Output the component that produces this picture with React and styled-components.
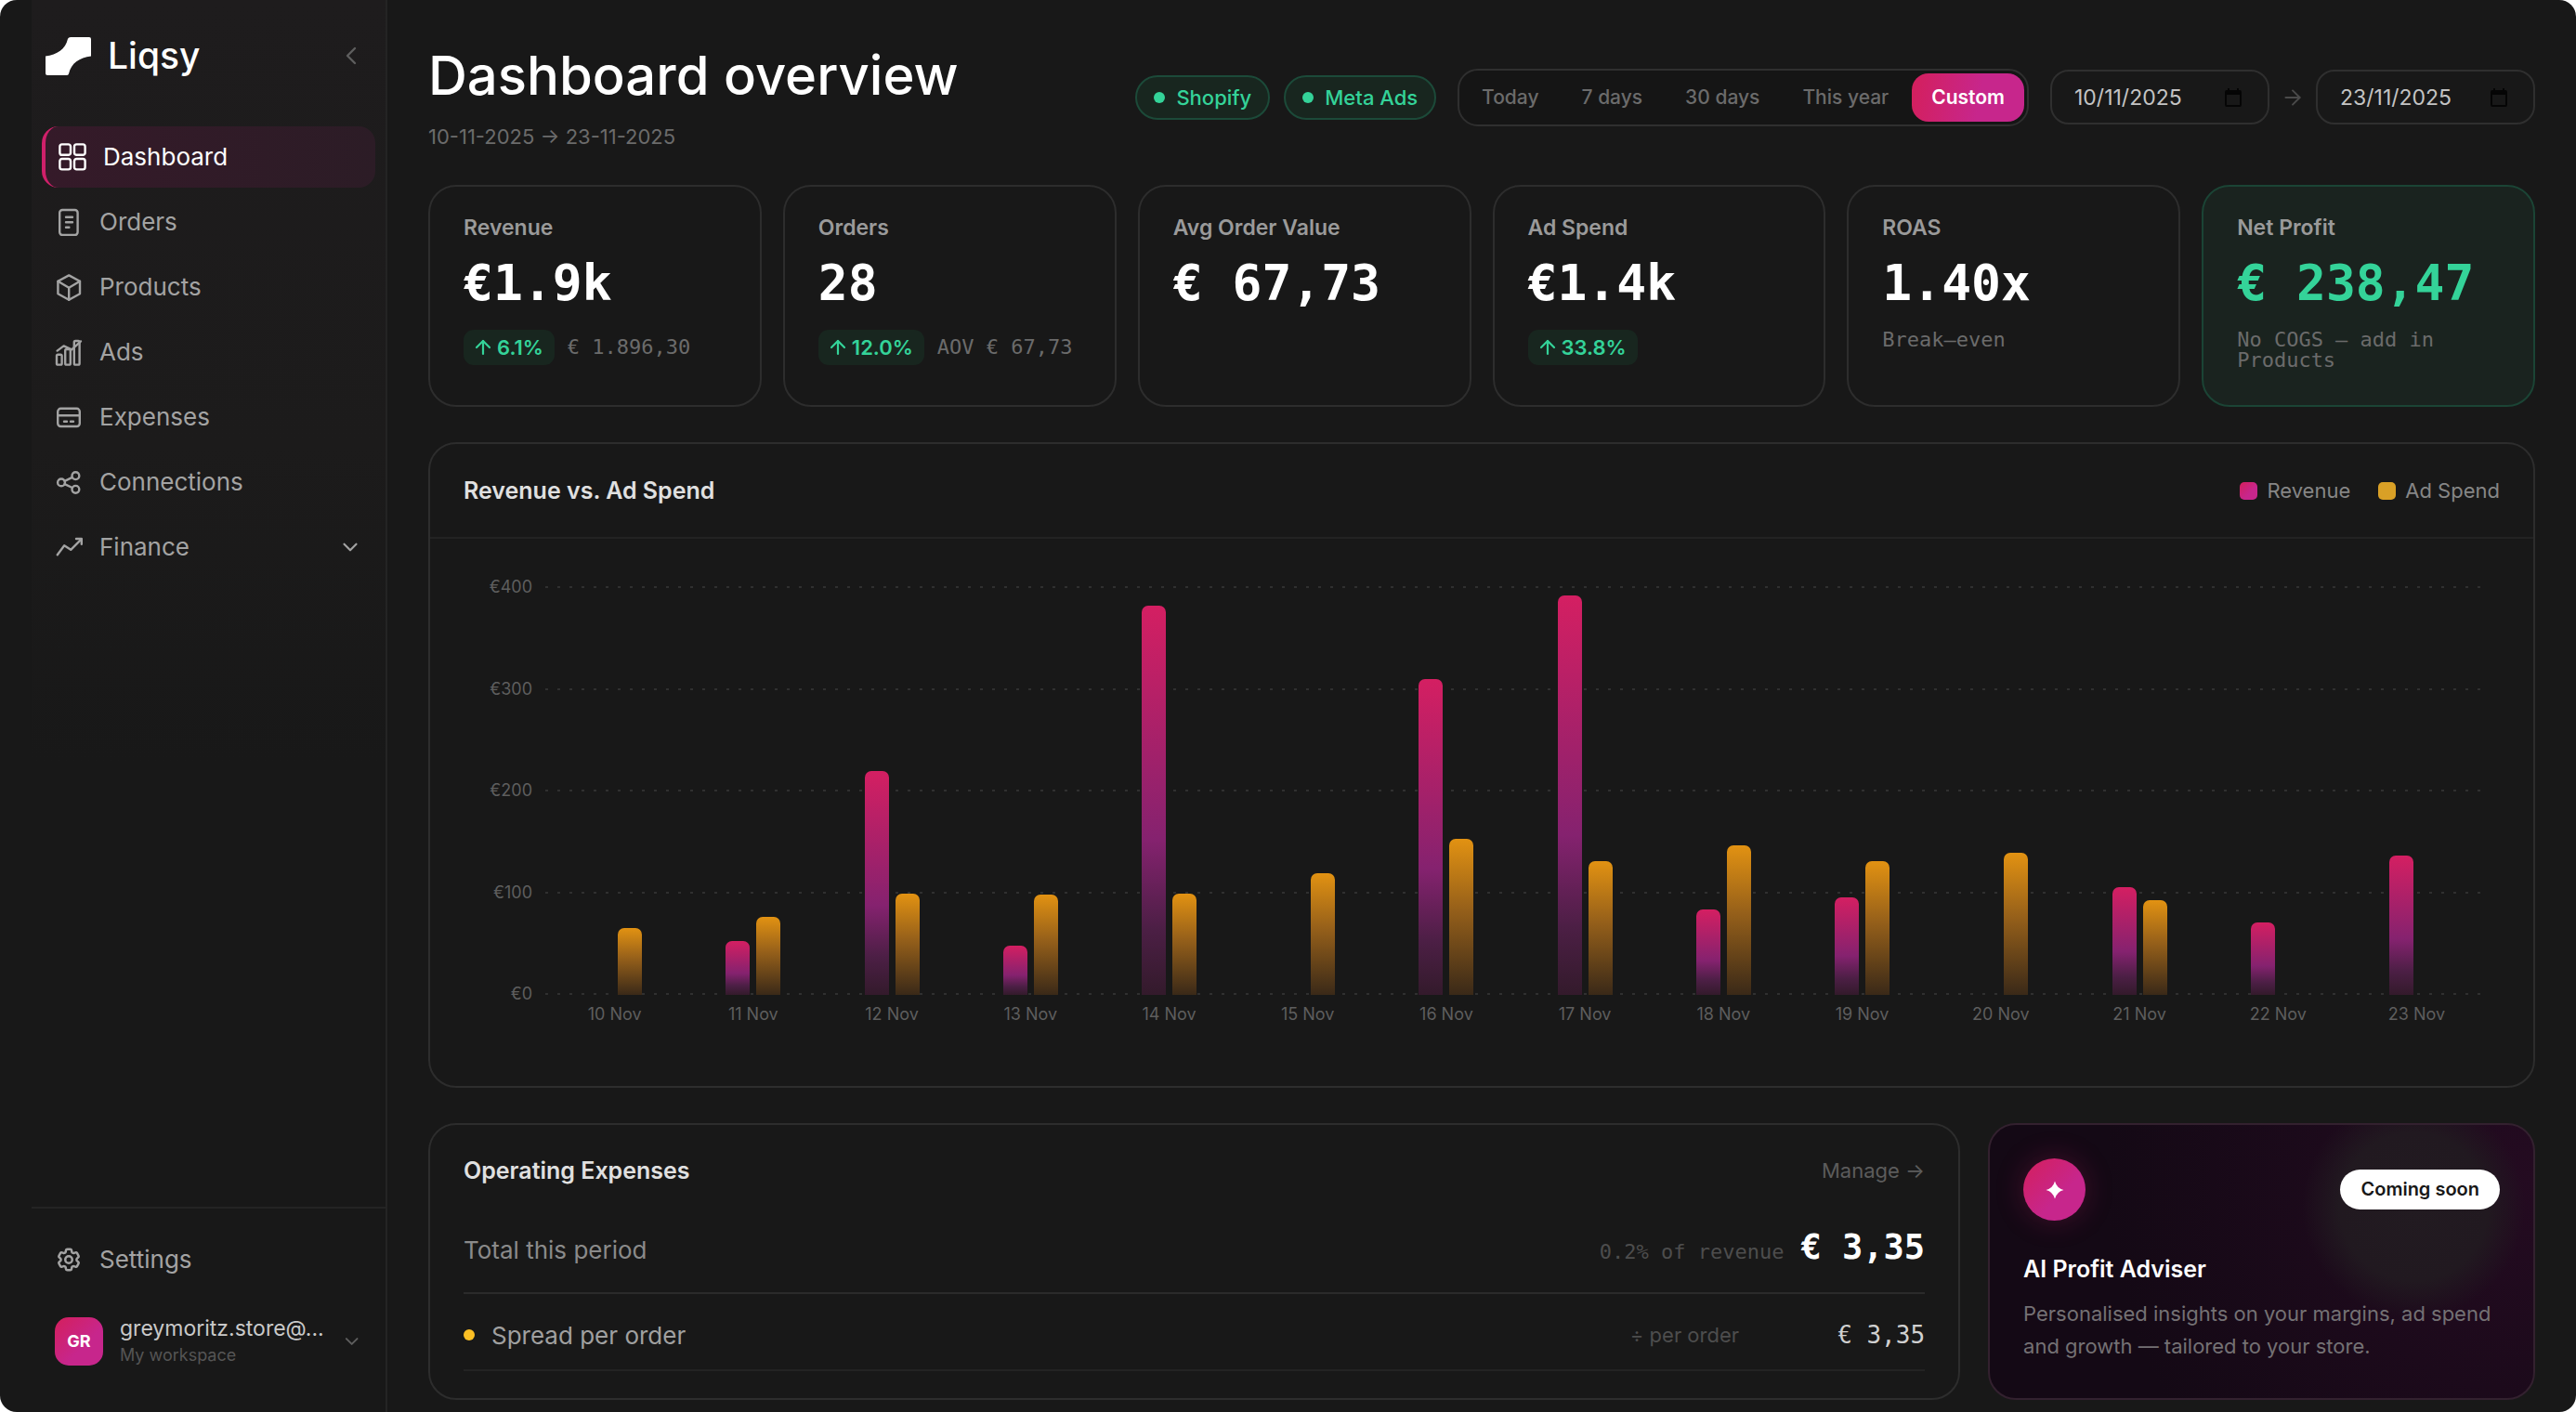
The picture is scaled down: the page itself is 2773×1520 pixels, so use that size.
import React, { useState } from 'react'
import styled, { createGlobalStyle, css } from 'styled-components'
import { ArrowRight, ArrowUp, ChevronDown, ChevronLeft } from 'lucide-react'
import { HiOutlineCog6Tooth } from 'react-icons/hi2'

const GlobalStyle = createGlobalStyle`
  *, *::before, *::after {
    box-sizing: border-box;
  }

  body {
    margin: 0;
    background: #ffffff;
    color: #ffffff;
    font-family: Inter, 'Noto Sans', sans-serif;
    font-size: 22px;
  }

  h1, h2, p, ul {
    margin: 0;
    padding: 0;
  }

  button, input {
    font-family: inherit;
  }

  a {
    color: inherit;
    text-decoration: none;
  }
`

const mono = css`
  font-family: 'DejaVu Sans Mono', 'Liberation Mono', monospace;
`

const brandGradient = 'linear-gradient(135deg, #d41f5c 0%, #c7268c 60%)'

const Shell = styled.div`
  display: flex;
  min-height: 100vh;
  padding-left: 34px;
  background: #181818;
  border-radius: 18px;
  overflow: hidden;
`

/* Sidebar */

const Sidebar = styled.aside`
  flex: none;
  display: flex;
  flex-direction: column;
  width: 383px;
  border-right: 2px solid #242424;
  background: linear-gradient(#1e1c1d 0, #1c1b1b 480px, #181818 820px);
`

const SidebarTop = styled.div`
  display: flex;
  align-items: center;
  gap: 19px;
  padding: 26px 21px 26px 15px;
  height: 120px;
  margin-bottom: 16px;
`

const Brand = styled.a`
  flex: 1;
  display: flex;
  align-items: center;
  gap: 18px;
  font-size: 39px;
  font-weight: 500;
  line-height: 46px;
`

const IconButton = styled.button`
  display: flex;
  padding: 0;
  border: none;
  background: none;
  color: #5e5e5e;
  cursor: pointer;
`

const Nav = styled.nav`
  display: flex;
  flex-direction: column;
  gap: 4px;
  padding: 0 11px;
`

const navItem = css`
  display: flex;
  align-items: center;
  gap: 18px;
  width: 100%;
  height: 66px;
  padding: 0 14px;
  border: none;
  border-radius: 18px;
  background: none;
  color: #a3a3a3;
  font-size: 26px;
  line-height: 32px;
  text-align: left;
  cursor: pointer;
`

const NavLink = styled.a`
  ${navItem}

  ${(props) =>
    props.$active &&
    css`
      border-left: 4px solid #d0206a;
      background: linear-gradient(90deg, #351a29, #2c1c26);
      color: #ffffff;
    `}
`

const NavToggle = styled.button`
  ${navItem}
`

const NavLabel = styled.span`
  flex: 1;
`

const SidebarFooter = styled.div`
  display: flex;
  flex-direction: column;
  gap: 22px;
  margin-top: auto;
  padding: 22px 11px 43px;
  border-top: 2px solid #242424;
`

const UserMenu = styled.button`
  ${navItem}
  color: #5e5e5e;
`

const Avatar = styled.span`
  flex: none;
  display: flex;
  align-items: center;
  justify-content: center;
  width: 52px;
  height: 52px;
  border-radius: 15px;
  background: ${brandGradient};
  color: #ffffff;
  font-size: 18px;
  font-weight: 700;
`

const UserText = styled.span`
  flex: 1;
  display: flex;
  flex-direction: column;
`

const UserName = styled.span`
  color: #c9c9c9;
  font-size: 23px;
  line-height: 30px;
`

const UserPlace = styled.span`
  color: #555555;
  font-size: 18px;
  line-height: 28px;
`

/* Page header */

const Main = styled.main`
  flex: 1;
  display: flex;
  flex-direction: column;
  gap: 38px;
  min-width: 0;
  padding: 48px 44px 13px;
`

const Header = styled.header`
  display: flex;
  align-items: center;
  justify-content: space-between;
`

const PageTitle = styled.h1`
  margin-bottom: 19px;
  font-size: 58px;
  font-weight: 500;
  line-height: 66px;
`

const Period = styled.p`
  color: #6b6b6b;
  line-height: 28px;
`

const Controls = styled.div`
  display: flex;
  align-items: center;
  gap: 23px;
`

const Sources = styled.div`
  display: flex;
  gap: 15px;
`

const SourcePill = styled.span`
  display: flex;
  align-items: center;
  gap: 12px;
  height: 48px;
  padding: 0 18px;
  border: 2px solid #1c4a39;
  border-radius: 24px;
  background: #18261f;
  color: #34d399;
  font-weight: 500;
`

const Dot = styled.span`
  flex: none;
  width: 12px;
  height: 12px;
  border-radius: 50%;
  background: ${(props) => props.$color};
`

const RangeGroup = styled.div`
  display: flex;
  gap: 4px;
  padding: 3px;
  border: 2px solid #2f2f2f;
  border-radius: 22px;
  background: #151515;
`

const RangeButton = styled.button`
  height: 52px;
  padding: 0 21px;
  border: none;
  border-radius: 18px;
  background: ${(props) => (props.$active ? 'linear-gradient(100deg, #d41f5c, #c7268c 60%)' : 'none')};
  color: ${(props) => (props.$active ? '#ffffff' : '#6b6b6b')};
  font-size: 21px;
  font-weight: ${(props) => (props.$active ? 600 : 500)};
  cursor: pointer;
`

const DateRange = styled.div`
  display: flex;
  align-items: center;
  gap: 12px;
  color: #4a4a4a;
`

const DateField = styled.label`
  display: flex;
  align-items: center;
  width: 236px;
  height: 59px;
  padding: 0 28px 0 24px;
  border: 2px solid #2f2f2f;
  border-radius: 20px;
`

const DateInput = styled.input`
  flex: 1;
  min-width: 0;
  padding: 0;
  border: none;
  outline: none;
  background: none;
  color: #c4c4c4;
  font-size: 23px;
`

/* Cards */

const Card = styled.section`
  border: 2px solid ${(props) => (props.$positive ? '#1b4435' : '#2d2d2d')};
  border-radius: 30px;
  background: ${(props) => (props.$positive ? '#1a231f' : '#181818')};
`

const Stats = styled.div`
  display: grid;
  grid-template-columns: repeat(6, 1fr);
  gap: 23px;
`

const StatCard = styled(Card)`
  padding: 30px 36px 37px;
`

const StatLabel = styled.h2`
  color: #9a9a9a;
  font-size: 23px;
  font-weight: 600;
  line-height: 28px;
`

const StatValue = styled.p`
  ${mono}
  margin: 18px 0 22px;
  color: ${(props) => (props.$positive ? '#34d399' : '#ffffff')};
  font-size: 53px;
  font-weight: 700;
  line-height: 56px;
  white-space: nowrap;
`

const StatFoot = styled.div`
  ${mono}
  display: flex;
  align-items: center;
  gap: 14px;
  color: #6b6b6b;
  line-height: 22px;
`

const Change = styled.span`
  display: flex;
  align-items: center;
  gap: 3px;
  height: 38px;
  padding: 0 12px 0 9px;
  border-radius: 11px;
  background: #18261f;
  color: #34d399;
  font-family: Inter, sans-serif;
  font-size: 22px;
  font-weight: 600;
`

const CardTitle = styled.h2`
  color: ${(props) => props.$color || '#e0e0e0'};
  font-size: 25px;
  font-weight: 600;
  line-height: 32px;
`

/* Chart */

const ChartHeader = styled.div`
  display: flex;
  align-items: center;
  justify-content: space-between;
  height: 102px;
  padding: 0 36px;
  border-bottom: 2px solid #232323;
`

const Legend = styled.ul`
  display: flex;
  gap: 30px;
  color: #868686;
  list-style: none;
`

const LegendItem = styled.li`
  display: flex;
  align-items: center;
  gap: 10px;
`

const Swatch = styled.span`
  width: 19px;
  height: 19px;
  border-radius: 5px;
  background: ${(props) => props.$fill};
`

const ChartBody = styled.div`
  display: grid;
  grid-template-columns: 74px 1fr;
  column-gap: 14px;
  padding: 51px 51px 64px 36px;
  color: #5e5e5e;
  font-size: 18px;
`

const AxisY = styled.div`
  display: flex;
  flex-direction: column;
  justify-content: space-between;
  line-height: 2px;
  text-align: right;
`

const Plot = styled.div`
  display: grid;
  height: 440px;
`

const GridLines = styled.div`
  grid-area: 1 / 1;
  display: flex;
  flex-direction: column;
  justify-content: space-between;
`

const GridLine = styled.span`
  height: 2px;
  background: repeating-linear-gradient(90deg, #303030 0 3px, transparent 3px 13px);
`

const Days = styled.div`
  grid-area: 1 / 1;
  display: flex;
  padding-top: 1px;
`

const Day = styled.div`
  flex: 1;
  display: grid;
  grid-template-columns: 26px 26px;
  justify-content: center;
  align-items: end;
  column-gap: 7px;
`

const Bar = styled.span`
  border-radius: 7px 7px 0 0;
  background: ${(props) =>
    props.$kind === 'revenue'
      ? 'linear-gradient(#d41f62, #85226f 60%, #4c1f45 83%, #331a2b)'
      : 'linear-gradient(#e29212, #96601a 45%, #3a2918)'};
`

const AxisX = styled.div`
  grid-column: 2;
  display: flex;
  margin-top: 8px;
  line-height: 26px;
  text-align: center;
`

const AxisLabel = styled.span`
  flex: 1;
`

/* Bottom row */

const BottomRow = styled.div`
  display: grid;
  grid-template-columns: 2.8fr 1fr;
  gap: 30px;
`

const ExpensesCard = styled(Card)`
  padding: 33px 36px 29px;
`

const ExpensesHeader = styled.div`
  display: flex;
  align-items: center;
  justify-content: space-between;
`

const ManageLink = styled.a`
  display: flex;
  align-items: center;
  gap: 4px;
  color: #5c5c5c;
`

const ExpenseTotal = styled.div`
  display: flex;
  align-items: baseline;
  justify-content: space-between;
  margin-top: 26px;
  padding: 20px 0 22px;
  border-bottom: 2px solid #2b2b2b;
  color: #8a8a8a;
  font-size: 26px;
  line-height: 42px;
`

const TotalValue = styled.span`
  ${mono}
  display: flex;
  align-items: baseline;
  gap: 18px;
`

const Share = styled.span`
  color: #4d4d4d;
  font-size: 22px;
`

const Total = styled.strong`
  color: #ffffff;
  font-size: 37px;
`

const ExpenseList = styled.ul`
  margin-top: 7px;
  list-style: none;
`

const ExpenseRow = styled.li`
  display: flex;
  align-items: center;
  height: 76px;
  border-bottom: 2px solid #232323;
  color: #a0a0a0;
  font-size: 26px;
`

const ExpenseName = styled.span`
  flex: 1;
  margin-left: 18px;
`

const ExpenseBasis = styled.span`
  color: #4d4d4d;
  font-size: 22px;
`

const ExpenseAmount = styled.span`
  ${mono}
  width: 200px;
  color: #d0d0d0;
  text-align: right;
`

const AdviserCard = styled(Card)`
  padding: 36px;
  border-color: #33212f;
  background:
    radial-gradient(circle at 78% 30%, #221b21 0, #211920 80px, transparent 120px),
    radial-gradient(circle at 100% 20%, #240b21, transparent 460px),
    #140915;
`

const AdviserTop = styled.div`
  display: flex;
  align-items: center;
  justify-content: space-between;
  margin-bottom: 36px;
`

const AdviserIcon = styled.span`
  display: flex;
  align-items: center;
  justify-content: center;
  width: 67px;
  height: 67px;
  border-radius: 50%;
  background: ${brandGradient};
  box-shadow: 0 0 30px rgba(208, 32, 106, 0.25);
`

const SoonBadge = styled.span`
  height: 43px;
  padding: 0 22px;
  border-radius: 22px;
  background: #ffffff;
  color: #181818;
  font-size: 20px;
  font-weight: 600;
  line-height: 43px;
`

const AdviserText = styled.p`
  margin-top: 15px;
  color: #747174;
  line-height: 35px;
`

const Icon = ({ children }) => (
  <svg
    width="30"
    height="30"
    viewBox="0 0 30 30"
    fill="none"
    stroke="currentColor"
    strokeWidth="2.4"
    strokeLinecap="round"
    strokeLinejoin="round"
    aria-hidden="true"
  >
    {children}
  </svg>
)

const DashboardIcon = () => (
  <Icon>
    <rect x="1.4" y="1.4" width="11.6" height="11.4" rx="2.4" />
    <rect x="17" y="1.4" width="11.6" height="11.4" rx="2.4" />
    <rect x="1.4" y="17" width="11.6" height="11.4" rx="2.4" />
    <rect x="17" y="17" width="11.6" height="11.4" rx="2.4" />
  </Icon>
)

const OrdersIcon = () => (
  <Icon>
    <rect x="5.2" y="2" width="19.4" height="27" rx="3" />
    <path d="M12 9.8h7M12 15.2h7M12 20.8h3.4" />
  </Icon>
)

const ProductsIcon = () => (
  <Icon>
    <path d="M15.2 2.4 27 8.8v13.4l-11.8 6.6L3.4 22.2V8.8z" />
    <path d="m3.4 8.8 11.8 7 11.8-7M15.2 15.8v13" />
  </Icon>
)

const AdsIcon = () => (
  <Icon>
    <rect x="2" y="17.8" width="5.6" height="10.8" rx="1.4" />
    <rect x="11.2" y="12" width="5.6" height="16.6" rx="1.4" />
    <rect x="20.8" y="3" width="5.8" height="25.6" rx="1.4" />
    <path d="m2.6 13.6 7-5.2 8.6 4L28 3.4" />
  </Icon>
)

const ExpensesIcon = () => (
  <Icon>
    <rect x="3.2" y="5.8" width="23.6" height="19.2" rx="3.2" />
    <path d="M3.2 13.2h23.6M10 19.8h3M17 19.8h3" />
  </Icon>
)

const ConnectionsIcon = () => (
  <Icon>
    <circle cx="7" cy="15.4" r="3.9" />
    <circle cx="22.4" cy="8.2" r="3.9" />
    <circle cx="22.4" cy="22.8" r="3.9" />
    <path d="m10.6 13.8 8.2-3.9M10.6 17.1l8.2 3.9" />
  </Icon>
)

const FinanceIcon = () => (
  <Icon>
    <path d="m2.8 23.2 7.4-10 7 4.6L28.4 6.6" />
    <path d="M23 6h5.8v5.8" />
  </Icon>
)

const CalendarIcon = () => (
  <svg width="18" height="20" viewBox="0 0 18 20" fill="#050505" aria-hidden="true">
    <path
      fillRule="evenodd"
      d="M3 0h2v2h8V0h2v2h1a2 2 0 0 1 2 2v14a2 2 0 0 1-2 2H2a2 2 0 0 1-2-2V4a2 2 0 0 1 2-2h1zM2 7v11h14V7z"
    />
  </svg>
)

const Logo = () => (
  <svg width="49" height="41" viewBox="0 0 49 41" fill="#ffffff" aria-hidden="true">
    <path d="M27 0h20q2 0 2 2v18.500C36.500 22 27.500 28 25 39.500Q24.500 41 22.500 41H2q-2 0-2-2V20.500C12.500 19 21.500 13 24 1.800Q24.800 0 27 0z" />
  </svg>
)

const SparkIcon = () => (
  <svg width="20" height="20" viewBox="0 0 20 20" fill="#ffffff" aria-hidden="true">
    <path d="M10 0.500Q12 8 19.500 10 12 12 10 19.500 8 12 0.500 10 8 8 10 0.500z" />
  </svg>
)

const NAV = [
  { label: 'Dashboard', icon: DashboardIcon },
  { label: 'Orders', icon: OrdersIcon },
  { label: 'Products', icon: ProductsIcon },
  { label: 'Ads', icon: AdsIcon },
  { label: 'Expenses', icon: ExpensesIcon },
  { label: 'Connections', icon: ConnectionsIcon },
]

const RANGES = ['Today', '7 days', '30 days', 'This year', 'Custom']

const STATS = [
  { label: 'Revenue', value: '€1.9k', change: '6.1%', note: '€ 1.896,30' },
  { label: 'Orders', value: '28', change: '12.0%', note: 'AOV € 67,73' },
  { label: 'Avg Order Value', value: '€ 67,73' },
  { label: 'Ad Spend', value: '€1.4k', change: '33.8%' },
  { label: 'ROAS', value: '1.40x', note: 'Break–even' },
  { label: 'Net Profit', value: '€ 238,47', note: 'No COGS — add in Products', positive: true },
]

const CHART_MAX = 400

const DAYS = [
  { label: '10 Nov', revenue: 0, spend: 66 },
  { label: '11 Nov', revenue: 53, spend: 77 },
  { label: '12 Nov', revenue: 220, spend: 99 },
  { label: '13 Nov', revenue: 48, spend: 98 },
  { label: '14 Nov', revenue: 382, spend: 99 },
  { label: '15 Nov', revenue: 0, spend: 119 },
  { label: '16 Nov', revenue: 310, spend: 153 },
  { label: '17 Nov', revenue: 392, spend: 131 },
  { label: '18 Nov', revenue: 84, spend: 147 },
  { label: '19 Nov', revenue: 96, spend: 131 },
  { label: '20 Nov', revenue: 0, spend: 139 },
  { label: '21 Nov', revenue: 106, spend: 93 },
  { label: '22 Nov', revenue: 71, spend: 0 },
  { label: '23 Nov', revenue: 137, spend: 0 },
]

const TICKS = [400, 300, 200, 100, 0]

const barHeight = (value) => ({ height: `${(value / CHART_MAX) * 100}%` })

function AppSidebar() {
  return (
    <Sidebar>
      <SidebarTop>
        <Brand href="#">
          <Logo />
          Liqsy
        </Brand>
        <IconButton type="button" aria-label="Collapse sidebar">
          <ChevronLeft size={32} strokeWidth={1.8} />
        </IconButton>
      </SidebarTop>
      <Nav>
        {NAV.map(({ label, icon: ItemIcon }) => (
          <NavLink key={label} href="#" $active={label === 'Dashboard'}>
            <ItemIcon />
            <NavLabel>{label}</NavLabel>
          </NavLink>
        ))}
        <NavToggle type="button">
          <FinanceIcon />
          <NavLabel>Finance</NavLabel>
          <ChevronDown size={26} />
        </NavToggle>
      </Nav>
      <SidebarFooter>
        <NavLink href="#">
          <HiOutlineCog6Tooth size={30} strokeWidth={2} />
          <NavLabel>Settings</NavLabel>
        </NavLink>
        <UserMenu type="button">
          <Avatar>GR</Avatar>
          <UserText>
            <UserName>greymoritz.store@...</UserName>
            <UserPlace>My workspace</UserPlace>
          </UserText>
          <ChevronDown size={26} />
        </UserMenu>
      </SidebarFooter>
    </Sidebar>
  )
}

function PageHeader() {
  const [range, setRange] = useState('Custom')
  const [from, setFrom] = useState('10/11/2025')
  const [to, setTo] = useState('23/11/2025')

  return (
    <Header>
      <div>
        <PageTitle>Dashboard overview</PageTitle>
        <Period>10-11-2025 → 23-11-2025</Period>
      </div>
      <Controls>
        <Sources>
          <SourcePill><Dot $color="#34d399" />Shopify</SourcePill>
          <SourcePill><Dot $color="#34d399" />Meta Ads</SourcePill>
        </Sources>
        <RangeGroup>
          {RANGES.map((name) => (
            <RangeButton key={name} type="button" $active={name === range} onClick={() => setRange(name)}>
              {name}
            </RangeButton>
          ))}
        </RangeGroup>
        <DateRange>
          <DateField>
            <DateInput aria-label="From" value={from} onChange={(e) => setFrom(e.target.value)} />
            <CalendarIcon />
          </DateField>
          <ArrowRight size={26} strokeWidth={1.8} />
          <DateField>
            <DateInput aria-label="To" value={to} onChange={(e) => setTo(e.target.value)} />
            <CalendarIcon />
          </DateField>
        </DateRange>
      </Controls>
    </Header>
  )
}

function RevenueChart() {
  return (
    <Card>
      <ChartHeader>
        <CardTitle>Revenue vs. Ad Spend</CardTitle>
        <Legend>
          <LegendItem><Swatch $fill={brandGradient} />Revenue</LegendItem>
          <LegendItem><Swatch $fill="#d9a026" />Ad Spend</LegendItem>
        </Legend>
      </ChartHeader>
      <ChartBody>
        <AxisY>
          {TICKS.map((tick) => <span key={tick}>€{tick}</span>)}
        </AxisY>
        <Plot>
          <GridLines>
            {TICKS.map((tick) => <GridLine key={tick} />)}
          </GridLines>
          <Days>
            {DAYS.map((day) => (
              <Day key={day.label}>
                <Bar $kind="revenue" style={barHeight(day.revenue)} />
                <Bar $kind="spend" style={barHeight(day.spend)} />
              </Day>
            ))}
          </Days>
        </Plot>
        <AxisX>
          {DAYS.map((day) => <AxisLabel key={day.label}>{day.label}</AxisLabel>)}
        </AxisX>
      </ChartBody>
    </Card>
  )
}

function App() {
  return (
    <Shell>
      <GlobalStyle />
      <AppSidebar />
      <Main>
        <PageHeader />
        <Stats>
          {STATS.map((stat) => (
            <StatCard key={stat.label} $positive={stat.positive}>
              <StatLabel>{stat.label}</StatLabel>
              <StatValue $positive={stat.positive}>{stat.value}</StatValue>
              <StatFoot>
                {stat.change && (
                  <Change><ArrowUp size={24} strokeWidth={2.2} />{stat.change}</Change>
                )}
                {stat.note}
              </StatFoot>
            </StatCard>
          ))}
        </Stats>
        <RevenueChart />
        <BottomRow>
          <ExpensesCard>
            <ExpensesHeader>
              <CardTitle>Operating Expenses</CardTitle>
              <ManageLink href="#">Manage →</ManageLink>
            </ExpensesHeader>
            <ExpenseTotal>
              <span>Total this period</span>
              <TotalValue>
                <Share>0.2% of revenue</Share>
                <Total>€ 3,35</Total>
              </TotalValue>
            </ExpenseTotal>
            <ExpenseList>
              <ExpenseRow>
                <Dot $color="#fbbf24" />
                <ExpenseName>Spread per order</ExpenseName>
                <ExpenseBasis>÷ per order</ExpenseBasis>
                <ExpenseAmount>€ 3,35</ExpenseAmount>
              </ExpenseRow>
            </ExpenseList>
          </ExpensesCard>
          <AdviserCard>
            <AdviserTop>
              <AdviserIcon><SparkIcon /></AdviserIcon>
              <SoonBadge>Coming soon</SoonBadge>
            </AdviserTop>
            <CardTitle $color="#ffffff">AI Profit Adviser</CardTitle>
            <AdviserText>Personalised insights on your margins, ad spend and growth — tailored to your store.</AdviserText>
          </AdviserCard>
        </BottomRow>
      </Main>
    </Shell>
  )
}

export default App
